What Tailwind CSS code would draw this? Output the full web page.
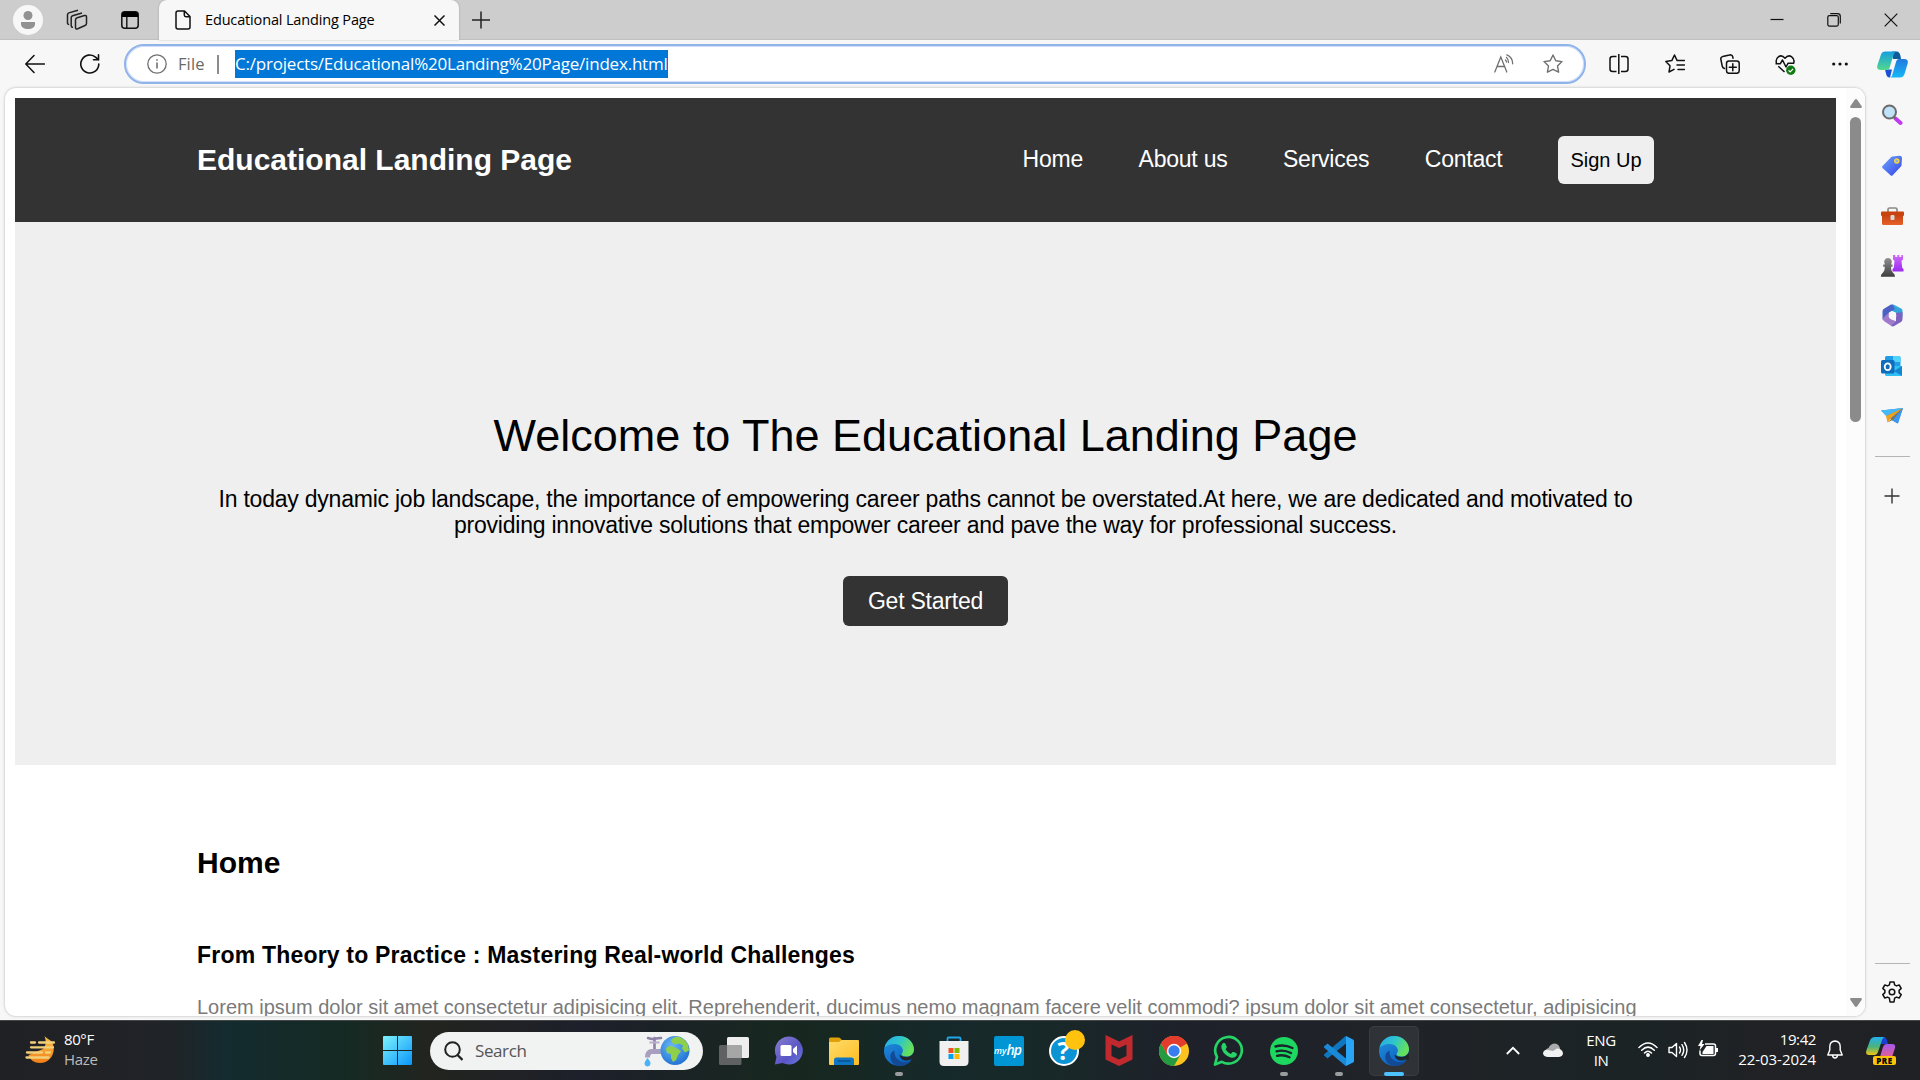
<!DOCTYPE html>
<html lang="en">
<head>
<meta charset="utf-8">
<title>Educational Landing Page</title>
<script src="https://cdn.jsdelivr.net/npm/@tailwindcss/browser@4"></script>
</head>
<body class="w-[1920px] h-[1080px] overflow-hidden bg-[#f7f7f7] font-['Open_Sans','Noto_Sans',sans-serif] text-black flex flex-col">
<svg class="absolute w-0 h-0" aria-hidden="true">
  <defs>
    <linearGradient id="gBlue" x1="0" y1="0" x2="1" y2="1"><stop offset="0" stop-color="#7df3fc"/><stop offset="1" stop-color="#0a95fb"/></linearGradient>
    <linearGradient id="edgeTop" x1="0" y1="0" x2="1" y2=".4"><stop offset="0" stop-color="#2aa9e6"/><stop offset=".5" stop-color="#2cc4cf"/><stop offset="1" stop-color="#66e05c"/></linearGradient>
    <linearGradient id="edgeMid" x1="0" y1="0" x2=".5" y2="1"><stop offset="0" stop-color="#2492dc"/><stop offset="1" stop-color="#0c63c4"/></linearGradient>
    <linearGradient id="tagG" x1="0" y1="0" x2="1" y2="1"><stop offset="0" stop-color="#6ea8f8"/><stop offset="1" stop-color="#3540ea"/></linearGradient>
    <linearGradient id="boxG" x1="0" y1="0" x2="0" y2="1"><stop offset="0" stop-color="#b83c0a"/><stop offset="1" stop-color="#e8602a"/></linearGradient>
    <linearGradient id="rookG" x1="0" y1="0" x2="0" y2="1"><stop offset="0" stop-color="#cf6bf8"/><stop offset="1" stop-color="#9a2bf0"/></linearGradient>
    <linearGradient id="pawnG" x1="0" y1="0" x2="0" y2="1"><stop offset="0" stop-color="#8f8f8f"/><stop offset="1" stop-color="#3e3e3e"/></linearGradient>
    <linearGradient id="chatG" x1="0" y1="0" x2="1" y2="1"><stop offset="0" stop-color="#8a7fd0"/><stop offset=".6" stop-color="#5a55c6"/><stop offset="1" stop-color="#6a7be0"/></linearGradient>
    <linearGradient id="foldG" x1="0" y1="0" x2="1" y2="1"><stop offset="0" stop-color="#ffdb6b"/><stop offset="1" stop-color="#fcbd20"/></linearGradient>
    <linearGradient id="sunG" x1="0" y1="0" x2="0" y2="1"><stop offset="0" stop-color="#f5c24a"/><stop offset="1" stop-color="#f47f16"/></linearGradient>
    <linearGradient id="cpA" x1="0" y1="0" x2="0" y2="1"><stop offset="0" stop-color="#159fe0"/><stop offset="1" stop-color="#52d88c"/></linearGradient>
    <linearGradient id="cpB" x1="0" y1="0" x2="0" y2="1"><stop offset="0" stop-color="#2378de"/><stop offset="1" stop-color="#16b8f6"/></linearGradient>
    <linearGradient id="cpC" x1="0" y1="0" x2="0" y2="1"><stop offset="0" stop-color="#22b0f0"/><stop offset=".55" stop-color="#4bb37a"/><stop offset="1" stop-color="#f3c511"/></linearGradient>
    <linearGradient id="cpD" x1="0" y1="0" x2="0" y2="1"><stop offset="0" stop-color="#a458ee"/><stop offset="1" stop-color="#f0637e"/></linearGradient>
    <radialGradient id="earthG" cx=".4" cy=".35" r=".7"><stop offset="0" stop-color="#6bb7f5"/><stop offset="1" stop-color="#1e70d2"/></radialGradient>
    <symbol id="edge" viewBox="0 0 30 30">
      <circle cx="15" cy="15" r="15" fill="url(#edgeMid)"/>
      <path d="M.6 11.500C2.300 4.600 8.200 0 15 0c8.500 0 15 6.300 15 13.200 0 4.400-3.300 7.300-7 7.300-3 0-5.400-1-5.400-2.300 0-.9 1.300-1.500 1.300-3.600C18.900 11.300 15.400 8 10.800 8 6.500 8 2.800 9.600.6 11.500z" fill="url(#edgeTop)"/>
      <path d="M10.500 14.500c-.8 8 5.500 11.600 10.500 11.600 3 0 5.500-1.100 6.800-2.200C25 28 20.500 30 16 30 9 30 5.500 24 6.500 19c.5-2 2-3.700 4-4.500z" fill="#134a95"/>
      <path d="M30 16v8l-2 0c.5-1-.5-1-1.500-.4-3.500 2-10.500 1.200-11-5.100 2.500 3 9.500 3.500 12.300.6 1-1 1.800-2 2.200-3.100z" fill="#1f2529"/>
    </symbol>
  </defs>
</svg>

<!-- Tab strip -->
<header class="h-10 shrink-0 bg-[#cdcdcd] flex items-center pl-[13px] shadow-[inset_0_-1px_0_#c0c0c0]">
  <svg class="size-[30px]" viewBox="0 0 30 30"><circle cx="15" cy="15" r="15" fill="#f7f7f7"/><circle cx="15" cy="10.500" r="4.500" fill="#929292"/><path d="M8 17h14v2c0 3.500-3 5-7 5s-7-1.500-7-5z" fill="#929292"/></svg>
  <svg class="size-[22px] ml-[23px]" viewBox="0 0 22 22" fill="none" stroke="#222" stroke-width="1.500" stroke-linejoin="round"><path d="M9.500 11q0-1.800 1.700-2.300L18.500 6.500q2-.4 2 1.500v6.500q0 1.500-1.500 2l-7.300 3.300q-2.200.7-2.200-1.300zM7 18.200c-1.200.1-1.800-.5-1.800-1.600V8.500c0-.9.5-1.500 1.400-1.800L16 4M3.200 15.500c-1.200 0-1.700-.6-1.700-1.600V5.700c0-.9.400-1.500 1.300-1.800L12 1.200"/></svg>
  <svg class="size-[18px] ml-[33px]" viewBox="0 0 18 18"><rect x=".8" y=".8" width="16.400" height="16.400" rx="3" fill="none" stroke="#111" stroke-width="1.500"/><path d="M1 6V3.500Q1 1 3.500 1h11Q17 1 17 3.500V6z" fill="#000"/><path d="M5.800 6v11" stroke="#111" stroke-width="1.400"/></svg>
  <div class="ml-5 w-[300px] h-10 bg-[#f7f7f7] rounded-t-lg flex items-center pl-[16px] pr-[14px] shadow-[0_0_2px_rgba(0,0,0,.25)]">
    <svg class="w-4 h-5" viewBox="0 0 16 20" fill="none" stroke="#111" stroke-width="1.500" stroke-linejoin="round"><path d="M1 3c0-1.500.7-2 2-2h6.500L15 6.500V17c0 1.400-.7 2-2 2H3c-1.300 0-2-.6-2-2zM9.300 1v4c0 1.200.6 1.700 1.700 1.700h4"/></svg>
    <span class="ml-[14px] text-[14.500px] tracking-[-0.150px] whitespace-nowrap">Educational Landing Page</span>
    <svg class="size-[11px] ml-auto" viewBox="0 0 11 11" stroke="#111" stroke-width="1.500"><path d="M.5.500l10 10M10.500.500l-10 10"/></svg>
  </div>
  <svg class="size-[18px] ml-[13px]" viewBox="0 0 18 18" stroke="#222" stroke-width="1.500"><path d="M0 9h18M9 .5v17"/></svg>
  <div class="ml-auto flex pr-px">
    <div class="w-[57px] flex justify-center"><svg class="size-[14px]" viewBox="0 0 14 14" stroke="#111" stroke-width="1.200"><path d="M.5 6.500h13"/></svg></div>
    <div class="w-[57px] flex justify-center"><svg class="size-[14px]" viewBox="0 0 14 14" fill="none" stroke="#111" stroke-width="1.200"><rect x=".8" y="2.600" width="10.500" height="10.500" rx="1.500"/><path d="M3.300.7h7.200c1.800 0 2.800 1 2.800 2.700v7"/></svg></div>
    <div class="w-[57px] flex justify-center"><svg class="size-[14px]" viewBox="0 0 14 14" stroke="#111" stroke-width="1.200"><path d="M.7.700l12.600 12.600M13.300.7L.7 13.300"/></svg></div>
  </div>
</header>

<!-- Toolbar -->
<nav class="h-12 shrink-0 flex items-center pl-[25px] text-[#6a6a6a]">
  <svg class="size-5" viewBox="0 0 20 20" fill="none" stroke="#111" stroke-width="1.500" stroke-linecap="round" stroke-linejoin="round"><path d="M19.500 10H1M9 1.500.8 10 9 18.500"/></svg>
  <svg class="size-5 ml-[35px]" viewBox="0 0 20 20" fill="none" stroke="#111" stroke-width="1.600" stroke-linecap="round"><path d="M18.800 10a9 9 0 1 1-3-6.700l2.700 2.500M18.500.800v5h-5"/></svg>
  <div class="ml-6 w-[1462px] h-10 rounded-full border-2 border-[#90b3ea] bg-white shadow-[inset_0_0_0_1px_#cfe0fa] flex items-center pl-[21px] pr-[21px]">
    <svg class="size-5" viewBox="0 0 20 20" fill="none" stroke="#707070" stroke-width="1.300"><circle cx="10" cy="10" r="9.200"/><path d="M10 8.500v6M10 5.200v1.600" stroke-width="1.600"/></svg>
    <span class="ml-[11px] w-[28px] text-[16.500px] tracking-[0.100px]">File</span>
    <span class="ml-[11px] w-[2px] h-[19px] bg-[#8c8c8c]"></span>
    <span class="ml-4 h-7 w-[433px] flex items-center bg-[#0178d7] text-white text-[17px] tracking-[-0.210px] whitespace-nowrap">C:/projects/Educational%20Landing%20Page/index.html</span>
    <svg class="ml-auto w-5 h-5" viewBox="0 0 20 20" fill="none" stroke="#707070" stroke-width="1.300" stroke-linecap="round"><path d="M.8 18 6.800 3l6 15M3 12.500h7.800M12.500 3.500c1.300 1 2 2.500 2 5M12.800.8c3.500 1.500 6 4.500 5.800 9M11.500 6c.6.500 1 1.300 1 2"/></svg>
    <svg class="ml-[29px] size-5" viewBox="0 0 20 20" fill="none" stroke="#707070" stroke-width="1.400" stroke-linejoin="round"><path d="m10 1 2.800 5.700 6.200.9-4.500 4.400 1.100 6.200L10 15.300l-5.600 2.900L5.500 12 1 7.600l6.200-.9z"/></svg>
  </div>
  <svg class="ml-[23px] size-5" viewBox="0 0 20 20" fill="none" stroke="#111" stroke-width="1.500"><path d="M7.500 2.500H3.500Q1 2.500 1 5v10q0 2.500 2.500 2.500h4M12 2.500h4.500Q19 2.500 19 5v10q0 2.500-2.500 2.500H12M9.800 0v20"/></svg>
  <svg class="ml-9 size-5" viewBox="0 0 20 20" fill="none" stroke="#111" stroke-width="1.500" stroke-linejoin="round" stroke-linecap="round"><path d="M13 6.500 12 6.400 9.500 1 6.800 6.600.8 7.500 5 11.800l-1 6.200 5-2.600M13 6.500h6.500M12 11h7.500M13 15.500h6.500"/></svg>
  <svg class="ml-[35px] size-5" viewBox="0 0 20 20" fill="none" stroke="#111" stroke-width="1.500" stroke-linecap="round"><rect x="6.500" y="7" width="12.700" height="12.300" rx="2.500"/><path d="M12.800 9.700v7M9.300 13.200h7M4.500 14.500C3 14 2.500 13.500 2.200 12L.9 5.500C.5 4 1.200 3 2.700 2.600L9.500 1c1.500-.4 2.800.2 3.200 1.700l.3 1.500"/></svg>
  <svg class="ml-[35px] size-[21px]" viewBox="0 0 21 21" fill="none" stroke="#111" stroke-width="1.500" stroke-linejoin="round"><path d="M1.600 9.500C-.3 4 5.500-1 10 4.200c4.500-5.200 10.500-.2 8.600 5.300M.5 9.800h4.700L7.500 6l3.500 7 2-3.700h6M3.300 12.200 9.500 18"/><circle cx="15.800" cy="16.300" r="4.700" fill="#127a12" stroke="none"/><path d="m13.600 16.300 1.600 1.600 2.900-3" stroke="#fff" stroke-width="1.200"/></svg>
  <svg class="ml-[36px] w-4 h-5" viewBox="0 0 16 20" fill="#111"><circle cx="1.700" cy="10" r="1.600"/><circle cx="8" cy="10" r="1.600"/><circle cx="14.300" cy="10" r="1.600"/></svg>
  <svg class="ml-[29px] w-[31px] h-[27px]" viewBox="0 0 31 27"><path d="M8 18.500h7l-2 8C10.500 26.500 9.500 25 9 22.500z" fill="#1a4fd6"/><path d="M15 .5h4.500c2.500 0 3.200 1.500 4 4.500L24 8h-8z" fill="#0f5c9c"/><path d="M8.500.5H20c-2 0-2.800 1.500-3.500 3.500l-4 13c-.5 1.500-1.500 2-3 2H4c-3.500 0-4.500-2-3.500-5L4 3.500C4.700 1.500 6 .5 8.500.5z" fill="url(#cpA)"/><path d="M22.500 8H27c3.500 0 4.500 2 3.500 5L27.500 23c-.8 2.500-2.300 3.500-4.500 3.500H12.500c2 0 2.500-1.500 3-3.500l3.500-12c.5-2 1.500-3 3.500-3z" fill="url(#cpB)"/></svg>
</nav>

<div class="h-[932px] shrink-0 flex">
  <!-- Page viewport -->
  <div class="ml-[5px] w-[1860px] h-[928px] bg-white rounded-[11px] overflow-hidden flex shadow-[0_0_3px_rgba(0,0,0,.28)] font-['Liberation_Sans',Arial,sans-serif]">
    <main class="w-[1841px] pt-[10px] pl-[10px] pr-[10px]">
      <section class="h-[124px] bg-[#333] px-[182px] flex items-center justify-between text-white">
        <h1 class="text-[30px] leading-[34px] font-bold whitespace-nowrap">Educational Landing Page</h1>
        <div class="flex items-center text-[23px] leading-[26px] tracking-[-0.230px] gap-[55.500px] whitespace-nowrap">
          <span class="-mt-0.5">Home</span><span class="-mt-0.5">About us</span><span class="-mt-0.5">Services</span><span class="-mt-0.5">Contact</span>
          <button class="w-24 h-12 rounded-md bg-[#efefef] text-black text-[20px] tracking-normal">Sign Up</button>
        </div>
      </section>
      <section class="h-[543px] bg-[#efefef] flex flex-col items-center pt-[188px]">
        <h2 class="text-[45px] leading-[52px] whitespace-nowrap">Welcome to The Educational Landing Page</h2>
        <p class="mt-[24px] w-[1457px] text-center text-[23px] leading-[26px] tracking-[-0.225px]">In today dynamic job landscape, the importance of empowering career paths cannot be overstated.At here, we are dedicated and motivated to<br>providing innovative solutions that empower career and pave the way for professional success.</p>
        <button class="mt-[38px] w-[165px] h-[50px] rounded-md bg-[#333] text-white text-[23px] leading-[26px] tracking-[-0.230px]">Get Started</button>
      </section>
      <section class="pl-[182px] pt-[81px]">
        <h2 class="text-[30px] leading-[34px] font-bold">Home</h2>
        <h3 class="mt-[62px] text-[23px] leading-[26px] font-bold tracking-[0.200px] whitespace-nowrap">From Theory to Practice : Mastering Real-world Challenges</h3>
        <p class="mt-[27px] text-[20px] leading-[24px] text-[#7a7a7a] whitespace-nowrap">Lorem ipsum dolor sit amet consectetur adipisicing elit. Reprehenderit, ducimus nemo magnam facere velit commodi? ipsum dolor sit amet consectetur, adipisicing</p>
      </section>
    </main>
    <div class="w-[19px] bg-[#fcfcfc] flex flex-col items-center pt-[11px] pb-[9px]">
      <svg class="w-3 h-[9px]" viewBox="0 0 12 9"><path d="M6 0q.7 0 1.200.8l4.500 6.500q.6 1.700-1 1.700H1.300q-1.600 0-1-1.700L4.800.8Q5.300 0 6 0z" fill="#8b8b8b"/></svg>
      <div class="mt-[9px] w-[11px] h-[305px] rounded-full bg-[#8b8b8b]"></div>
      <svg class="mt-auto w-3 h-[9px]" viewBox="0 0 12 9"><path d="M6 9q.7 0 1.200-.8l4.500-6.500Q12.300 0 10.700 0H1.300Q-.3 0 .3 1.700l4.500 6.500Q5.300 9 6 9z" fill="#8b8b8b"/></svg>
    </div>
  </div>

  <!-- Edge sidebar -->
  <aside class="w-[55px] flex flex-col items-center pt-4 pr-px">
    <svg class="size-[22px]" viewBox="0 0 22 22"><path d="m14.500 14.500 5 4.500" stroke="#c23af0" stroke-width="4" stroke-linecap="round"/><path d="m11.500 11.500 3 3" stroke="#666" stroke-width="2"/><circle cx="8.500" cy="8" r="6.500" fill="#bfe2f8" stroke="#6b6b6b" stroke-width="2"/></svg>
    <svg class="mt-[29px] size-[22px]" viewBox="0 0 22 22"><path d="M11.500 1.500 18.500.8q2.500 0 2.500 2.200L20.500 10q0 1-.8 1.700l-8 8.600q-1 1-2.200 0L1.500 13q-1-1 0-2L10 2.200q.7-.6 1.500-.7z" fill="url(#tagG)"/><circle cx="15.800" cy="6" r="2" fill="#7eb0f5" stroke="#f5d53a" stroke-width="1.500"/></svg>
    <svg class="mt-[29px] w-[23px] h-[20px]" viewBox="0 0 23 20"><path d="M7 6V3.500Q7 2 8.500 2h6Q16 2 16 3.500V6" fill="none" stroke="#8a8a8a" stroke-width="1.700"/><rect x="1" y="6" width="21" height="13" rx="1.500" fill="url(#boxG)"/><rect x="0" y="5.500" width="23" height="4.500" rx="1" fill="#c8430d"/><rect x="9.500" y="9" width="4" height="5" rx="1" fill="#d8d8d8"/></svg>
    <svg class="mt-[28px] size-[24px]" viewBox="0 0 24 24"><path d="M13 1h2.300v2h2V1h2v2h2V1H23v4.500l-1.500 1.300.7 7 1.300 1.200v2.500h-11V15l1.300-1.200.7-7L13 5.500z" fill="url(#rookG)"/><path d="M8 4a4 4 0 0 1 3 6.500h1.500v2.200H11c0 3 .5 4.500 2 6q2 1.500 2 4H.8q0-2.500 2-4c1.500-1.500 2-3 2-6H3.200v-2.200H5A4 4 0 0 1 8 4z" fill="url(#pawnG)"/></svg>
    <svg class="mt-[26px] size-[23px]" viewBox="0 0 23 23"><path d="M11 .5q1-.3 2 .3l7.500 4q1 .7 1 2.200v6L15.500 9 9 6z" fill="#32a7dd"/><path d="M11.500.5q-1-.3-2 .3L3 4.700Q1.500 5.500 1.500 7.500v8l6-2.500V9.700q0-1 .9-1.500L14 5z" fill="#4b62c4"/><path d="M1.500 14.500Q2 16.500 3.500 17.500l7 4.500q1 .5 2.500 0l5-3.500L9.500 15 7.500 9z" fill="#a07acb"/><path d="M21.500 8v7q0 2-1.500 3l-7 4q-1.500.7-3-.2l5-4.500V9z" fill="#7c63c0"/><circle cx="11.500" cy="11.600" r="3.800" fill="#f7f7f7"/></svg>
    <svg class="mt-[28px] size-[22px]" viewBox="0 0 22 22"><rect x="4" y="1" width="15.500" height="16" rx="1.500" fill="#1f9de6"/><path d="M12 1h6q1.500 0 1.500 1.500V7H12z" fill="#52d3fb"/><path d="M4 11h17v8.500q0 1.500-1.500 1.500H5.500Q4 21 4 19.500z" fill="#2fc0f5"/><path d="m21 11-8 5 8 5z" fill="#1585ce"/><rect x="0" y="5" width="13.500" height="13.500" rx="1.500" fill="#0f6dbd"/><ellipse cx="6.700" cy="11.700" rx="3" ry="3.400" fill="none" stroke="#fff" stroke-width="1.800"/></svg>
    <svg class="mt-[30px] w-[22px] h-[18px]" viewBox="0 0 22 18"><path d="M0 3.500 22 1l-5 15.500-5.500-3z" fill="#2b86e6"/><path d="M0 3.500 22 1 5 9z" fill="#45b8f5"/><path d="M22 1 5 9l1.500 6.500L10 11z" fill="#f0a11b"/><path d="M22 1 6.500 15.500 11.500 13z" fill="#9c6d1e"/><path d="m22 1-10.500 12.500 5 3z" fill="#3b99f3"/></svg>
    <div class="mt-[31px] w-[35px] h-px bg-[#b5b5b5]"></div>
    <svg class="mt-[31px] size-[16px]" viewBox="0 0 16 16" stroke="#333" stroke-width="1.400"><path d="M.5 8h15M8 .5v15"/></svg>
    <div class="mt-auto w-[35px] h-px bg-[#b5b5b5]"></div>
    <svg class="mt-[17px] mb-[17px] size-[22px] shrink-0" viewBox="0 0 22 22" fill="none" stroke="#111" stroke-width="1.500" stroke-linejoin="round"><path d="M9 1h4l.6 2.800 1.900 1.100 2.700-.9 2 3.400-2.100 2v2.200l2.100 2-2 3.400-2.700-.9-1.900 1.100L13 21H9l-.6-3.800-1.900-1.100-2.700.9-2-3.400 2.100-2V9.400l-2.100-2 2-3.400 2.700.9 1.900-1.100z"/><circle cx="11" cy="11" r="2.800"/></svg>
  </aside>
</div>

<!-- Taskbar -->
<footer class="h-[60px] shrink-0 flex items-center text-white border-t border-[#454849] bg-[linear-gradient(90deg,#202125_0,#202327_170px,#142b2f_225px,#152a24_340px,#22241f_430px,#1e202b_580px,#17271f_790px,#16292a_940px,#182828_1050px,#1e212a_1180px,#202327_1400px,#1b2325_1640px,#202225_1760px,#202124_1920px)]">
  <div class="w-[358px] flex items-center pl-[25px]">
    <svg class="w-[30px] h-[30px] -mt-0.5" viewBox="0 0 30 30"><path d="M19.500 1c1.500 2.500 5.500 3 8 7 4 9-2 20-12.500 20C9.500 28 5 25 3.500 20L18 14c3-3 3.500-8 1.500-13z" fill="url(#sunG)"/><g stroke="#f2d07a" stroke-width="2.300" stroke-linecap="round"><path d="M6 7.500h4M14 7.500h15M6 12.300h22M2 17.500h15M21 17.500h4M1.500 22.500h22"/></g></svg>
    <div class="ml-[9px] -mt-[3px] text-[15px] leading-5"><div class="tracking-[-0.400px]">80°F</div><div class="text-[#bcbcbc] tracking-[-0.300px]">Haze</div></div>
  </div>
  <div class="w-[72px] pl-[25px]"><svg class="size-[29px]" viewBox="0 0 29 29"><path d="M1 0h13v14H0V1Q0 0 1 0zM15 0h13q1 0 1 1v13H15zM0 15h14v14H1q-1 0-1-1zM15 15h14v13q0 1-1 1H15z" fill="url(#gBlue)"/></svg></div>
  <div class="w-[273px] h-[38px] rounded-full bg-[#f1f2f2] flex items-center pl-[14px] pr-[13px]">
    <svg class="w-[19px] h-[20px]" viewBox="0 0 19 20" fill="none" stroke="#222" stroke-width="2"><circle cx="8.500" cy="8.500" r="7.300"/><path d="m13.500 14 5 5" stroke-width="2.300"/></svg>
    <span class="ml-[12px] text-[17px] text-[#555] tracking-[-0.400px]">Search</span>
    <svg class="ml-auto w-[46px] h-[32px]" viewBox="0 0 46 32"><path d="M4 3q4 1.500 7 .8T17 3M10.500 3v11" stroke="#8d81a8" stroke-width="2.600" fill="none" stroke-linecap="round"/><path d="M5.500 7.500h10" stroke="#b9aecb" stroke-width="2"/><path d="M18 16.500H8q-4.500 0-4.500 6" stroke="#a99fbe" stroke-width="5" fill="none"/><path d="M3.500 23q3.500 4 3 6-.8 2.500-3 2.500T.5 29q-.3-2 3-6z" fill="#4ab2f5"/><circle cx="31" cy="15.500" r="14.500" fill="url(#earthG)"/><path d="M22 14q1-3 5-3l3 1 4 2 3 2-3 4-2 5-3 2-2-4v-4l-4-1zM27 5q2-3 6-3.500 7 1 11 8l1 6-4 2-3-4 1-3-4-2-4 1-3-2z" fill="#8fd04a"/></svg>
  </div>
  <div class="ml-[3px] flex h-full items-center">
    <div class="w-[55px] flex justify-center"><svg class="size-[30px]" viewBox="0 0 30 30"><rect x="8" y="1" width="22" height="21" rx="1.500" fill="#eee"/><rect x="0" y="9" width="22.500" height="20" rx="1.500" fill="#5f6162"/><path d="M8 9h14.500v13H8z" fill="#a5a6a6"/></svg></div>
    <div class="w-[55px] flex justify-center"><svg class="size-[29px]" viewBox="0 0 29 29"><path d="M14.500.5a14 14 0 1 1-6 26.500L.8 28.500 2.500 21A14 14 0 0 1 14.500.5z" fill="url(#chatG)"/><rect x="6.500" y="9" width="11" height="11" rx="1.500" fill="#fff"/><path d="m19 13 4-3.500v10L19 16z" fill="#fff"/></svg></div>
    <div class="w-[55px] flex justify-center"><svg class="size-[30px]" viewBox="0 0 30 30"><path d="M0 3q0-1.500 1.500-1.500h8q1 0 1.700.8L13 4v4H0z" fill="#e0a008"/><path d="M0 6h10l2.500-2H29q1 0 1 1v23q0 1-1 1H1q-1 0-1-1z" fill="url(#foldG)"/><path d="M5 29v-5q0-2.500 2.500-2.500h15Q25 21.500 25 24v5z" fill="#0e74c4"/><path d="M8.500 25h13" stroke="#0a4c8d" stroke-width="1.300"/></svg></div>
    <div class="relative w-[55px] flex justify-center"><svg class="size-[30px]"><use href="#edge"/></svg><i class="absolute -bottom-[10px] w-2 h-1 rounded-full bg-[#9a9c9d]"></i></div>
    <div class="w-[55px] flex justify-center"><svg class="size-[30px]" viewBox="0 0 30 30"><path d="M8.500 6V2.500Q8.500 1.500 9.500 1.500h11q1 0 1 1V6" fill="none" stroke="#22a5e8" stroke-width="1.800"/><path d="M.5 5h29v20.500Q29.500 30 25 30H5Q.5 30 .5 25.500z" fill="#f0f0f0"/><path d="M9.500 12h5v5h-5z" fill="#f25022"/><path d="M15.500 12h5v5h-5z" fill="#7fba00"/><path d="M9.500 18h5v5h-5z" fill="#00a4ef"/><path d="M15.500 18h5v5h-5z" fill="#ffb900"/></svg></div>
    <div class="w-[55px] flex justify-center"><div class="size-[30px] rounded-[2px] bg-[#0096d6] flex items-center justify-center italic leading-none"><span class="text-[9px] font-semibold">my</span><span class="text-[14px] font-semibold tracking-[-1px] pr-0.5 -mt-0.5">hp</span></div></div>
    <div class="relative w-[55px] flex justify-center"><div class="size-[30px] rounded-full border-2 border-white bg-[#0b93d3] flex items-center justify-center text-[25px] leading-none font-bold">?</div><i class="absolute left-[29px] -top-[6px] size-[20px] rounded-full bg-[#ffc20e]"></i></div>
    <div class="w-[55px] flex justify-center"><svg class="w-[28px] h-[31px]" viewBox="0 0 28 31"><path d="m.5 0 13.500 6.500L27.500 0v24.500L14 31 .5 24.500zM6.500 9.500V21L14 24.500 21.500 21V9.500L14 13z" fill="#c02a2e" fill-rule="evenodd"/></svg></div>
    <div class="w-[55px] flex justify-center"><svg class="size-[30px]" viewBox="0 0 30 30"><circle cx="15" cy="15" r="15" fill="#fcc31e"/><path d="M15 15 2 7.500A15 15 0 0 1 28 7.500z" fill="#e33b2e"/><path d="M2 7.500A15 15 0 0 0 15 30l6.500-11.500L15 15 8.500 18.700z" fill="#249a41"/><path d="M2 7.500 8.500 18.700 15 8h13a15 15 0 0 0-26-.5z" fill="#e33b2e"/><circle cx="15" cy="15" r="7.200" fill="#fff"/><circle cx="15" cy="15" r="5.700" fill="#3a7df0"/></svg></div>
    <div class="w-[55px] flex justify-center"><svg class="size-[31px]" viewBox="0 0 31 31"><path d="M2 29.500 4 22a13.300 13.300 0 1 1 4.800 4.800z" fill="none" stroke="#25d366" stroke-width="2.700" stroke-linejoin="round"/><path d="M9.500 8.500q1.500-1.500 2.800 0l1.500 3.300q.2 1-1.300 2.500 2 3.500 5.300 4.700l1.800-2q.8-.5 3.900 1.300.8.800 0 2.400-2 3-6 1.800Q10.800 20 8.500 13.500 8 10.300 9.500 8.500z" fill="#25d366"/></svg></div>
    <div class="relative w-[55px] flex justify-center"><svg class="size-[28px]" viewBox="0 0 28 28"><circle cx="14" cy="14" r="14" fill="#1ed760"/><path d="M5.500 9.500Q14 7 22.500 11M6.500 14.300q7.500-2 14.500 1.700M7 18.800q6.500-1.700 12.500 1.500" stroke="#18262a" stroke-width="2.400" fill="none" stroke-linecap="round"/></svg><i class="absolute -bottom-[11px] w-2 h-1 rounded-full bg-[#9a9c9d]"></i></div>
    <div class="relative w-[55px] flex justify-center"><svg class="size-[30px]" viewBox="0 0 30 30"><path d="M22 0 29 3.500q1 .5 1 1.500v20q0 1-1 1.500L22 30z" fill="#2aa4f4"/><path d="M22 7.500 3.500 22.500 0 19.500v-1L21 .5l1-.5z" fill="#0f77c0"/><path d="M22 22.500 3.500 7.500 0 10.500v1L21 29.500l1 .5z" fill="#1a8ad8"/></svg><i class="absolute -bottom-[10px] w-2 h-1 rounded-full bg-[#9a9c9d]"></i></div>
    <div class="relative w-[55px] h-[50px] flex items-center justify-center"><div class="absolute inset-y-0 w-[50px] rounded-[5px] bg-white/7 border border-white/5"></div><svg class="relative size-[30px]"><use href="#edge"/></svg><i class="absolute bottom-0 w-5 h-1 rounded-full bg-[#4cc2ff]"></i></div>
  </div>
  <!-- System tray -->
  <div class="ml-auto pr-6 flex items-center text-[15px] leading-5">
    <svg class="w-[14px] h-[9px]" viewBox="0 0 14 9" fill="none" stroke="#fff" stroke-width="1.800"><path d="m.8 8 6.200-6.200L13.200 8"/></svg>
    <svg class="ml-[23px] -mt-0.5 w-[20px] h-[14px]" viewBox="0 0 20 14"><path d="M2 9.500Q2 6 5.500 5 7.500.5 12 .5q4 .5 5 5L16 10z" fill="#a9aaab"/><path d="M4.500 14Q0 13.500 0 10q.5-3 4-3.200L10 8l4-2.500q5 0 6 4.500 0 3.500-4 4z" fill="#f2f2f2"/></svg>
    <div class="ml-[22px] -mt-0.5 w-[32px] text-center tracking-[-0.400px]">ENG<br>IN</div>
    <svg class="ml-[21px] -mt-0.5 w-[20px] h-[15px]" viewBox="0 0 20 15" fill="none" stroke="#fff" stroke-width="1.500" stroke-linecap="round"><path d="M1 5.500q9-9 18 0M3.700 8.300q6.300-6.300 12.600 0M6.500 11q3.500-3.500 7 0"/><circle cx="10" cy="13" r="1.200" fill="#fff"/></svg>
    <svg class="ml-[10px] -mt-0.5 w-[20px] h-[18px]" viewBox="0 0 20 18" fill="none" stroke="#fff" stroke-width="1.400" stroke-linecap="round" stroke-linejoin="round"><path d="M1 6.500h3L8.500 2.500v13L4 11.500H1zM11.500 6q2 3 0 6M14 3.700q3.500 5.300 0 10.600M16.500 1.500q5 7.500 0 15"/></svg>
    <svg class="ml-[10px] -mt-1 w-[20px] h-[17px]" viewBox="0 0 20 17"><path d="M7 4h8.500Q17.500 4 17.500 6v7.500q0 2-2 2H4q-2 0-2-2v-3" fill="none" stroke="#fff" stroke-width="1.500"/><path d="M8.500 6h7v8H4.500l0-2zM18 8h2v4h-2zM3.500 0 0 6h2.500L1.500 10.500 6.500 4H4L5 0z" fill="#fff"/></svg>
    <div class="ml-[19px] -mt-[3px] w-[79px] flex flex-col items-end whitespace-nowrap"><div class="tracking-[-0.400px]">19:42</div><div class="tracking-[-0.050px]">22-03-2024</div></div>
    <svg class="ml-[11px] -mt-0.5 w-[16px] h-[19px]" viewBox="0 0 16 19" fill="none" stroke="#fff" stroke-width="1.400" stroke-linejoin="round"><path d="M8 1Q3 1.300 2.800 6.500V10L.8 15h14.400l-2-5V6.500Q13 1.300 8 1zM5.500 15.500q.5 2.500 2.500 2.500t2.500-2.500"/></svg>
    <div class="relative ml-[23px] w-[30px] h-[30px]">
      <svg class="w-[30px] h-[26px]" viewBox="0 0 30 26"><path d="M14 1h4q2 0 3 3l1 4h-8z" fill="#1b3fd0"/><path d="M9 1h10q-2 0-3 3l-4 12q-1 3-3 3H3q-4 0-2.500-5L4 4.500Q5.200 1 9 1z" fill="url(#cpC)"/><path d="M21 8h5q4 0 3 4l-4 12H11q2 0 3-3l3-10q1-3 4-3z" fill="url(#cpD)"/></svg>
      <span class="absolute left-[7px] top-[20px] w-[23px] h-[9px] rounded-[2px] bg-[#fdc30a] text-black text-[8px] leading-[9px] font-extrabold tracking-[0.500px] text-center">PRE</span>
    </div>
  </div>
</footer>
</body>
</html>
